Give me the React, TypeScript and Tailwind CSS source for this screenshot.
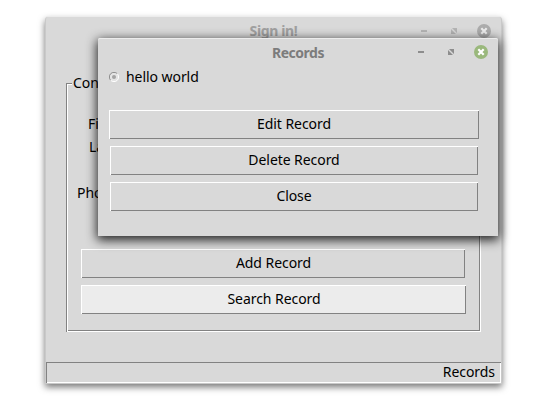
import React from "react";

const RAISED = "shadow-[inset_1px_1px_0_#fff,inset_-1px_-1px_0_#828282]";

function TkButton({ label, className }: { label: string; className: string }) {
  return (
    <button className={`flex h-[29px] items-center justify-center pb-px text-[14px] tracking-[-0.06px] leading-none text-black ${RAISED} ${className}`}>
      {label}
    </button>
  );
}

function Controls({ color, disc, cross }: { color: string; disc: string; cross: string }) {
  return (
    <svg width="76" height="16" viewBox="0 0 76 16" className="block">
      <rect x="3" y="7" width="6" height="2" fill={color} />
      <path d="M34 5H39V10ZM33 6V11H38Z" fill={color} />
      <circle cx="66" cy="8" r="7" fill={disc} />
      <path d="M63.3 5.3L68.7 10.7M68.7 5.3L63.3 10.7" stroke={cross} strokeWidth="2.2" />
    </svg>
  );
}

function TitleBar({ title, active }: { title: string; active: boolean }) {
  return (
    <div className="grid h-[27px] grid-cols-[83px_1fr_83px] items-center">
      <span />
      <span className={`text-center text-[14px] leading-none font-bold ${active ? "pt-0.5 tracking-[-0.5px] text-[#7c7c7c]" : "tracking-[-0.35px] text-[#a0a0a0]"}`}>
        {title}
      </span>
      <Controls
        color={active ? "#8d8d8d" : "#b4b4b4"}
        disc={active ? "#9ab87c" : "#acacac"}
        cross={active ? "#fff" : "#eee"}
      />
    </div>
  );
}

function SignInWindow() {
  return (
    <section className="absolute top-[17px] left-[45px] flex h-[367px] w-[457px] flex-col rounded-t-[3px] border-x border-b border-[#c9c9c9] bg-[#d9d9d9] shadow-[0_-1px_0_#ececec,0_3px_7px_rgba(0,0,0,0.55)]">
      <TitleBar title="Sign in!" active={false} />
      <fieldset className="relative mt-[39px] ml-5 flex h-[249px] w-[415px] flex-col pt-8 pl-[11px] shadow-[inset_1px_0_0_#828282,inset_0_1px_0_#828282,inset_-1px_-1px_0_#fff,inset_2px_2px_0_#fff,inset_-2px_-2px_0_#828282]">
        <span className="absolute top-[-9px] left-1.5 w-[30px] overflow-hidden bg-[#d9d9d9] pl-px text-[14px] leading-[18px] whitespace-nowrap">
          Con
        </span>
        <span className="ml-[11px] h-[23px] text-[14px] leading-[18px]">Fi</span>
        <span className="ml-3 h-[46px] text-[14px] leading-[18px]">La</span>
        <span className="h-[65px] text-[14px] leading-[18px]">Pho</span>
        <div className="ml-1 flex flex-col gap-[7px]">
          <TkButton label="Add Record" className="w-[384px] pl-px" />
          <TkButton label="Search Record" className="w-[385px] bg-[#ececec] pl-px" />
        </div>
      </fieldset>
      <footer className="mt-auto flex h-[21px] items-center justify-end pr-1.5 pb-px text-[14px] tracking-[-0.06px] leading-none shadow-[inset_1px_1px_0_#828282,inset_-1px_-1px_0_#fff]">
        Records
      </footer>
    </section>
  );
}

function RecordsDialog() {
  return (
    <section className="absolute top-[38px] left-[98px] h-[198px] w-[400px] rounded-t-[2px] bg-[#d9d9d9] shadow-[inset_0_1px_0_#ececec,0_3px_11px_1px_rgba(0,0,0,0.85)]">
      <TitleBar title="Records" active />
      <label className="flex h-[25px] items-center gap-[7px] pb-0.5 pl-[11px] text-[14px] tracking-[-0.06px] leading-none">
        <svg width="10" height="10" viewBox="0 0 10 10" className="mt-px">
          <circle cx="5" cy="5" r="4.5" fill="#e4e4e4" />
          <path d="M1.7 8.3A4.6 4.6 0 0 1 8.3 1.7" fill="none" stroke="#8b8b8b" />
          <path d="M8.3 1.7A4.6 4.6 0 0 1 1.7 8.3" fill="none" stroke="#fff" />
          <circle cx="5" cy="5" r="2" fill="#a3a3a3" />
        </svg>
        <span>hello world</span>
      </label>
      <div className="mt-5 ml-[11px] flex flex-col gap-[7px]">
        <TkButton label="Edit Record" className="w-[370px]" />
        <TkButton label="Delete Record" className="ml-px w-[368px]" />
        <TkButton label="Close" className="ml-px w-[368px]" />
      </div>
    </section>
  );
}

export default function App() {
  return (
    <main className="relative h-[406px] w-[545px] overflow-hidden bg-white font-['Noto_Sans',sans-serif] text-black">
      <SignInWindow />
      <RecordsDialog />
    </main>
  );
}
